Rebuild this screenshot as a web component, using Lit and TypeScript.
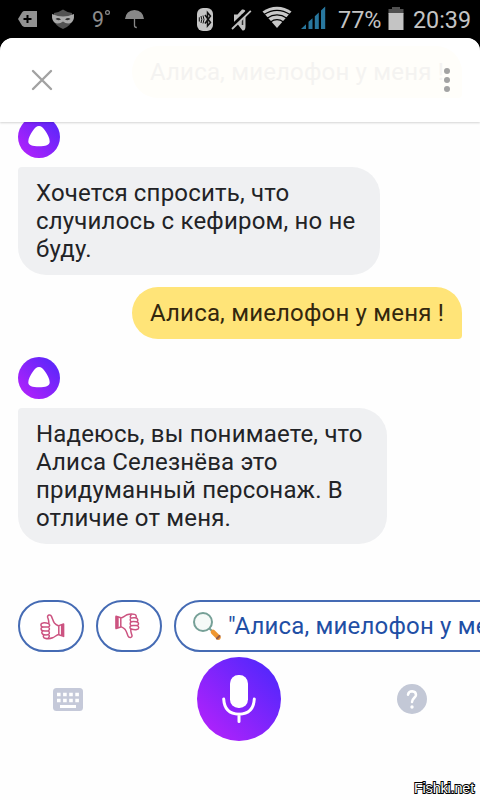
import { LitElement, html, css, svg } from "lit";
import { customElement, property } from "lit/decorators.js";

@customElement("alisa-avatar")
class AlisaAvatar extends LitElement {
  static styles = css`
    :host { display: block; width: 42px; height: 42px; }
    svg { display: block; }
  `;
  render() {
    return html`<svg width="42" height="42" viewBox="0 0 42 42">
      <defs><linearGradient id="g" x1="0.12" y1="0.88" x2="0.88" y2="0.12">
        <stop offset="0" stop-color="#ae22fb"/><stop offset="1" stop-color="#5c26fa"/>
      </linearGradient></defs>
      <circle cx="21" cy="21" r="21" fill="url(#g)"/>
      <path d="M21 10C23.4 10 25.2 11.8 27.2 14.8C29.4 18 31.7 22.3 31.7 25.4C31.7 28.8 27.6 30.3 21 30.3C14.4 30.3 10.3 28.8 10.3 25.4C10.3 22.3 12.6 18 14.8 14.8C16.8 11.8 18.6 10 21 10Z" fill="#fff"/>
    </svg>`;
  }
}

@customElement("chat-bubble")
class ChatBubble extends LitElement {
  @property({ type: Array }) lines: string[] = [];
  @property({ reflect: true }) side = "in";
  static styles = css`
    :host {
      display: block; box-sizing: border-box; padding: 12px 18px;
      font: 24px/28px Roboto, "Noto Sans", sans-serif; white-space: nowrap; letter-spacing: 0.18px;
      background: #eff0f2; color: #222326; border-radius: 4px 28px 28px 28px;
    }
    :host([side="out"]) { background: #ffe478; color: #33270d; border-radius: 28px 28px 4px 28px; }
    .line { display: block; }
  `;
  render() {
    return html`${this.lines.map((l) => html`<span class="line">${l}</span>`)}`;
  }
}

const hand = svg`
  <path d="M8.600 9.600C9.400 7.600 8.200 5 7.600 3.200C7.200 .8 10.600 .2 11.600 2.600C12.600 5 13 7.200 14.400 9C15.400 10.200 16.600 11 18.800 12V20.600C16.600 20.800 15 22.800 12.600 23.800C10.600 24.600 7 24.800 5 24.200C3 23.600 3 21.600 4 20.800C1.600 20.200 1.200 17.800 2.800 16.800C.6 16.200 .4 13.600 2.600 13C.2 12.200 .4 9.400 2.800 9C4.800 8.600 6.800 9 8.600 9.600Z"/>
  <path d="M2.600 13C5 13 7.200 13.200 8.400 12.900C9.900 12.400 10.200 10.600 8.600 9.600M2.800 16.800C5 17 7 17.200 8.200 16.800C9.800 16.200 9.800 13.800 8.400 12.900M4 20.800C5.600 21 7.400 21.200 8.600 20.400C9.800 19.600 9.600 17.600 8.200 16.800M8.600 20.600C9.800 21.400 9.400 23.200 8 24.200M18.800 11.600L23.600 10V22.400L18.800 20.800"/>
  <path d="M22.400 10.600V21.800" stroke-width="3"/>`;

@customElement("app-root")
class AppRoot extends LitElement {
  static styles = css`
    :host {
      display: block; width: 480px; height: 800px; overflow: hidden; position: relative;
      background: #000; font-family: Roboto, "Noto Sans", sans-serif;
    }
    svg { display: block; flex: none; }
    .screen { display: flex; flex-direction: column; height: 800px; }
    .status { height: 38px; flex: none; }
    .status text { font-family: Roboto, sans-serif; }
    .sheet {
      flex: 1; min-height: 0; background: #fefefe; border-radius: 13px 13px 0 0;
      display: flex; flex-direction: column; overflow: hidden;
    }
    .header {
      height: 84px; flex: none; box-sizing: border-box; display: flex; align-items: center;
      padding: 0 23px 0 30px; background: #fff; z-index: 1;
      box-shadow: 0 1px 2px #0000002b;
    }
    .ghost {
      margin-left: 78px; width: 330px; height: 52px; margin-top: -16px; box-sizing: border-box;
      padding: 12px 18px; border-radius: 28px 28px 4px 28px; background: #fffefa;
      color: #f4f3f1; font-size: 24px; line-height: 28px; white-space: nowrap; letter-spacing: 0.18px;
    }
    .more { margin-left: -25px; }
    .chat { flex: none; height: 478px; display: flex; flex-direction: column; align-items: flex-start; }
    .first { margin-top: -6px; }
    .b1 { width: 362px; margin: 9px 0 12px 18px; }
    .b2 { width: 330px; margin: 0 18px 18px 0; align-self: flex-end; }
    .b3 { width: 369px; margin: 9px 0 0 18px; }
    alisa-avatar { margin-left: 18px; }
    .chips { display: flex; gap: 12px; padding-left: 18px; height: 52px; flex: none; overflow: hidden; }
    .chip {
      box-sizing: border-box; height: 52px; width: 66px; flex: none; border: 2px solid #456bb4;
      border-radius: 26px; display: flex; align-items: center; justify-content: center; background: #fff;
    }
    .up { padding: 2px 0 0 3px; }
    .down { padding-right: 4px; }
    .search {
      width: 420px; justify-content: flex-start; padding-left: 16px; gap: 6px;
      color: #1f4fa5; font-size: 24px; line-height: 28px; white-space: nowrap; letter-spacing: 0.18px;
    }
    .controls {
      display: flex; justify-content: space-between; align-items: center;
      height: 84px; margin-top: 5px; padding: 0 53px; flex: none;
    }
    .mic { margin-left: -2px; }
    .mark {
      position: absolute; right: 6px; bottom: 3px; font: 14.5px/18px "Liberation Sans", Arial, sans-serif;
      color: #fff; letter-spacing: -0.2px; -webkit-text-stroke: 1.9px #000; paint-order: stroke fill;
    }
  `;

  statusBar() {
    return html`<svg class="status" width="480" height="38" viewBox="0 0 480 38">
      <path d="M18 19L22 12.4Q23 11 24.5 11H37V27H24.5Q23 27 22 25.6Z" fill="#929292"/>
      <path d="M27.5 15V23M23.5 19H31.5" stroke="#000" stroke-width="2"/>
      <path d="M63 9.5Q67 12.4 72 13V20Q71 26 63 29Q55 26 54 20V13Q59 12.4 63 9.5Z" fill="#525252"/>
      <path d="M52 14Q58 16.5 63 16.5Q68 16.5 74 14Q74.5 22 70 23.3Q66 24 63 21.5Q60 24 56 23.3Q51.5 22 52 14Z" fill="#aaa"/>
      <path d="M55.5 19Q58 17 61 19.5Q58 21 55.5 19M70.5 19Q68 17 65 19.5Q68 21 70.5 19" fill="#333"/>
      <text x="92" y="26.5" font-size="22.5" fill="#8b8b8b" textLength="12" lengthAdjust="spacingAndGlyphs">9</text>
      <circle cx="107.5" cy="12.5" r="1.900" fill="none" stroke="#8b8b8b" stroke-width="1.2"/>
      <path d="M125 19Q126 10.500 134.500 10Q143 10.500 144 19Z" fill="#888"/>
      <path d="M134.500 18V25.500Q134.500 27.500 136.800 27.500" stroke="#888" stroke-width="1.300" fill="none"/>
      <rect x="197" y="8" width="16" height="23" rx="6" fill="#c5c5c5"/>
      <path d="M205 15L210.500 22.500L207.500 26V12.500L210.500 16L205 23.500" fill="none" stroke="#111" stroke-width="1.500"/>
      <path d="M199.300 17.300V21.500M201 16Q202.600 19.500 201 23M203 15.500Q205 19.500 203 23.500" fill="none" stroke="#111" stroke-width="1"/>
      <path d="M234 14.500H237.500L242 9.500Q245.500 9 245.500 12V26Q245.500 31 242.500 30.500L237.500 24H234Z" fill="#c2c2c2"/>
      <path d="M242.500 14V25" stroke="#333" stroke-width="1.500"/>
      <path d="M230.500 28L250 9.500" stroke="#000" stroke-width="4"/>
      <path d="M232 29L250.800 10.800" stroke="#c2c2c2" stroke-width="1.800"/>
      <path d="M277 28L262.500 11.500Q269 6.700 277 6.700T291.500 11.500Z" fill="#c8c8c8"/>
      <path d="M264 14.600Q277 6 290 14.600M267 18.200Q277 11.600 287 18.200M270.500 22Q277 17.400 283.500 22" fill="none" stroke="#000" stroke-width="1.200"/>
      <path d="M301 29L306 24.300V29ZM308.500 21.800L312.500 18.200V29H308.500ZM314.800 16.200L318.800 12.600V29H314.800ZM321 10.600L325.200 6.500V29H321Z" fill="#28779e"/>
      <text x="338" y="28" font-size="23" fill="#c4c4c4" textLength="43.500" lengthAdjust="spacingAndGlyphs">77%</text>
      <path d="M392 7H400V9H403.500V14H388.500V9H392Z" fill="#505050"/>
      <rect x="388.500" y="13" width="15" height="17" fill="#c4c4c4"/>
      <text x="413" y="28" font-size="23.500" fill="#c4c4c4" textLength="58" lengthAdjust="spacingAndGlyphs">20:39</text>
    </svg>`;
  }

  render() {
    return html`<div class="screen">
      ${this.statusBar()}
      <div class="sheet">
        <div class="header">
          <svg width="24" height="24" viewBox="0 0 24 24"><path d="M3 3L21 21M21 3L3 21" stroke="#a2a2a2" stroke-width="2.4" stroke-linecap="round"/></svg>
          <div class="ghost">Алиса, миелофон у меня !</div>
          <svg class="more" width="20" height="28" viewBox="0 0 20 28" fill="#a3a3a3"><circle cx="10" cy="5" r="3"/><circle cx="10" cy="14" r="3"/><circle cx="10" cy="23" r="3"/></svg>
        </div>
        <div class="chat">
          <alisa-avatar class="first"></alisa-avatar>
          <chat-bubble class="b1" .lines=${["Хочется спросить, что", "случилось с кефиром, но не", "буду."]}></chat-bubble>
          <chat-bubble class="b2" side="out" .lines=${["Алиса, миелофон у меня !"]}></chat-bubble>
          <alisa-avatar></alisa-avatar>
          <chat-bubble class="b3" .lines=${["Надеюсь, вы понимаете, что", "Алиса Селезнёва это", "придуманный персонаж. В", "отличие от меня."]}></chat-bubble>
        </div>
        <div class="chips">
          <div class="chip up"><svg width="26" height="26" viewBox="0 0 26 26" fill="none" stroke="#cc5380" stroke-width="1.5" stroke-linejoin="round">${hand}</svg></div>
          <div class="chip down"><svg width="26" height="26" viewBox="0 0 26 26" fill="none" stroke="#cc5380" stroke-width="1.5" stroke-linejoin="round"><g transform="rotate(180 12.8 12.8)">${hand}</g></svg></div>
          <div class="chip search">
            <svg width="30" height="30" viewBox="0 0 30 30">
              <circle cx="11" cy="11" r="9" fill="#f6faf8" stroke="#76a097" stroke-width="2"/>
              <path d="M17.5 17.5L21 21" stroke="#76a097" stroke-width="2"/>
              <path d="M21 21L26.500 26.500" stroke="#ee9630" stroke-width="4.6" stroke-linecap="round"/>
              <path d="M25 27.500L27.500 25" stroke="#965b48" stroke-width="2.2" stroke-linecap="round"/>
            </svg><span>"Алиса, миелофон у меня !"</span>
          </div>
        </div>
        <div class="controls">
          <svg width="30" height="24" viewBox="0 0 30 24"><rect y="1" width="30" height="23" rx="3.5" fill="#c5c9d9"/>
            <path d="M4 7.500H26M4 13.500H26" stroke="#fff" stroke-width="3.4" stroke-dasharray="3.6 2.5"/><path d="M7 19.500H23" stroke="#fff" stroke-width="3"/></svg>
          <svg class="mic" width="84" height="84" viewBox="0 0 84 84">
            <defs><linearGradient id="m" x1="0.12" y1="0.88" x2="0.88" y2="0.12"><stop offset="0" stop-color="#ae22fb"/><stop offset="1" stop-color="#5427fc"/></linearGradient></defs>
            <circle cx="42" cy="42" r="42" fill="url(#m)"/>
            <rect x="33" y="18" width="18" height="33" rx="8.5" fill="#fff"/>
            <path d="M26.700 42Q27.500 57 42 57.200Q56.500 57 57.300 42M42 57V64.500" fill="none" stroke="#fff" stroke-width="3" stroke-linecap="round"/>
          </svg>
          <svg width="30" height="30" viewBox="0 0 30 30"><circle cx="15" cy="15" r="15" fill="#c3c8d6"/>
            <path d="M11 10.800Q11.500 7.300 15.200 7.300Q19 7.500 19 11C19 13.500 15 14.300 15 18" fill="none" stroke="#fff" stroke-width="2.500" stroke-linecap="round"/><circle cx="15" cy="23" r="1.700" fill="#fff"/></svg>
        </div>
      </div>
    </div>
    <div class="mark">Fishki.net</div>`;
  }
}
